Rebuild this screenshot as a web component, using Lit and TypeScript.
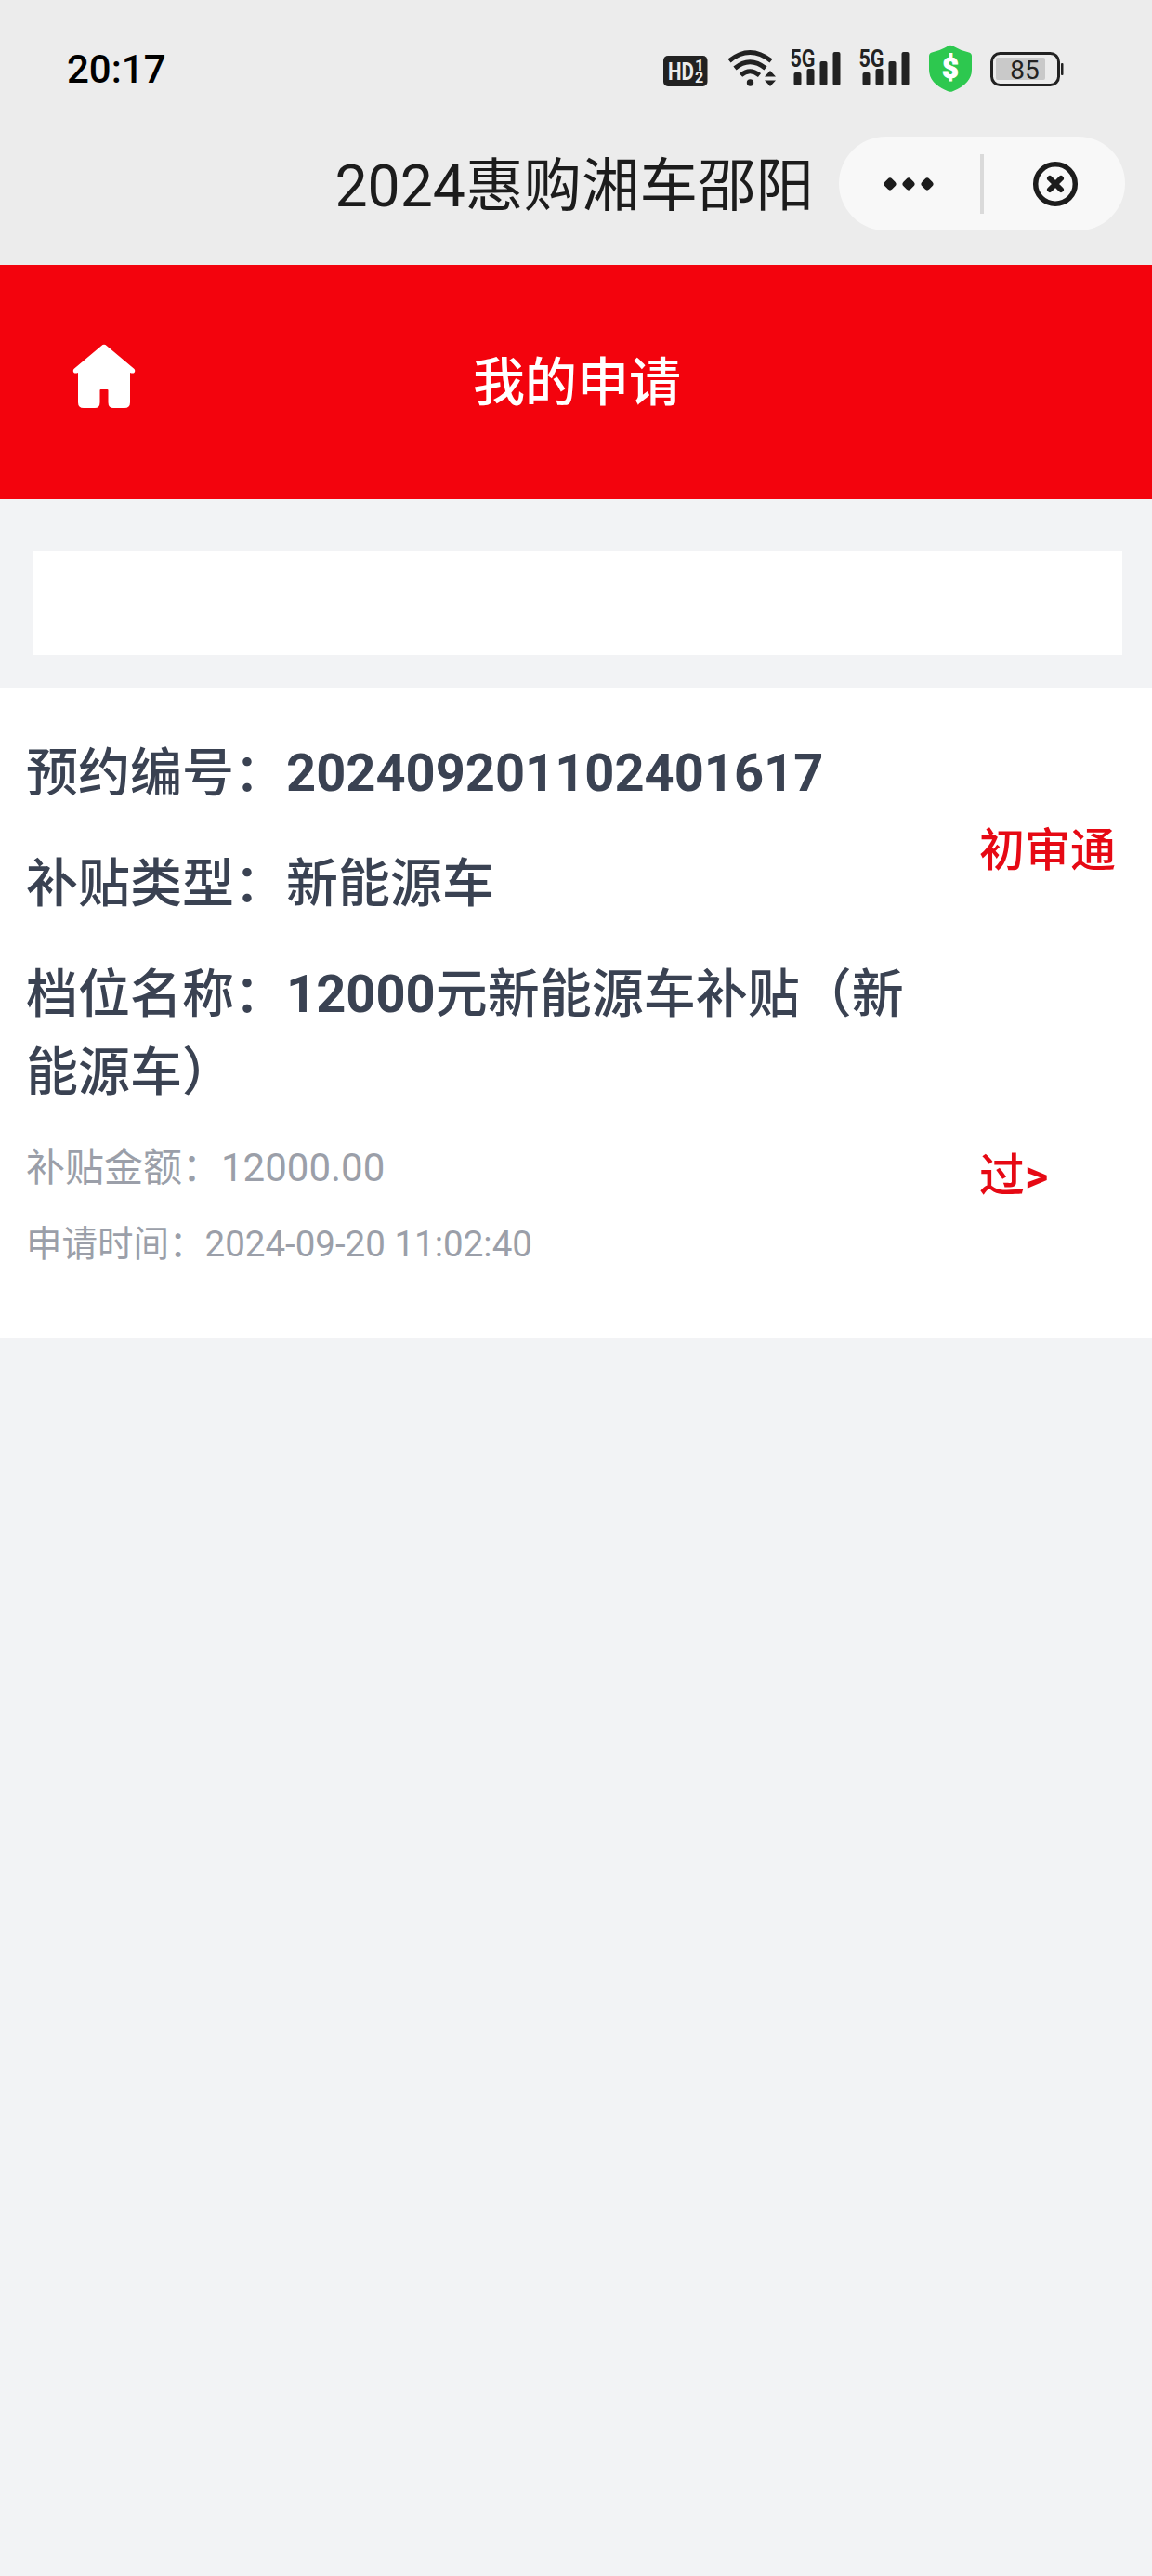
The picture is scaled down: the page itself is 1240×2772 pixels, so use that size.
import { LitElement, html, css, svg } from "lit";
import { customElement } from "lit/decorators.js";

const signal = () => html`
  <svg class="signal" width="56" height="56" viewBox="0 0 56 56">
    <text x="-0.5" y="25.5" font-size="25" font-weight="700" textLength="27" lengthAdjust="spacingAndGlyphs">5G</text>
    ${[[3.5, 32], [17.5, 28], [31.5, 20], [45.5, 10]].map(
      ([x, y]) => svg`<rect x=${x} y=${y} width="8" height=${46 - y} rx="2"></rect>`
    )}
  </svg>`;

@customElement("status-bar")
export class StatusBar extends LitElement {
  static styles = css`
    :host { display: flex; align-items: center; height: 56px; padding: 46px 95px 0 72px; }
    .time { flex: 1; font-size: 42px; line-height: 56px; font-weight: 500; color: #000; padding-top: 2px; }
    svg { display: block; fill: #222; font-family: Roboto, sans-serif; }
    .hd { margin-right: 20px; }
    .wifi { margin-right: 15px; }
    .signal { margin-right: 18px; }
    .shield { margin: 0 20px 0 1px; }
  `;
  render() {
    return html`
      <span class="time">20:17</span>
      <svg class="hd" width="48" height="56" viewBox="0 0 48 56">
        <rect x="0" y="14" width="47.5" height="33" rx="5"></rect>
        <g fill="#ececec" font-weight="700">
          <text x="5" y="39.500" font-size="26" textLength="28" lengthAdjust="spacingAndGlyphs">HD</text>
          <text x="34" y="29.500" font-size="17">1</text>
          <text x="34" y="42.500" font-size="16">2</text>
        </g>
      </svg>
      <svg class="wifi" width="54" height="56" viewBox="0 0 54 56">
        <g fill="none" stroke="#222" stroke-width="5">
          <path d="M3 19.500Q25 1.500 48 19.500"></path>
          <path d="M9 27.500Q25 14 42 27.500"></path>
          <path d="M15.500 35Q25 26.500 35.500 35"></path>
        </g>
        <circle cx="25.500" cy="43" r="3.700"></circle>
        <path d="M47 30l6 6.500H41zM47 47l6-6.500H41z"></path>
      </svg>
      ${signal()}${signal()}
      <svg class="shield" width="46" height="56" viewBox="0 0 46 56">
        <path fill="#2dc84f" d="M20.500 3.500Q23 2 25.500 3.500Q34 8.500 43 10.500Q46 11.300 46 14.500V29Q46 44 25.500 52.300Q23 53.300 20.500 52.300Q0 44 0 29V14.500Q0 11.300 3 10.500Q12 8.500 20.500 3.500Z"></path>
        <text x="23" y="38" text-anchor="middle" font-size="31" font-weight="800" fill="#fff" stroke="#fff">$</text>
      </svg>
      <svg width="79" height="56" viewBox="0 0 79 56">
        <rect x="1.500" y="11.500" width="72" height="34" rx="9" fill="none" stroke="#222" stroke-width="3"></rect>
        <rect x="6" y="16" width="53" height="24" rx="2" fill="#c9c9c9"></rect>
        <text x="37" y="38.700" text-anchor="middle" font-size="28">85</text>
        <rect x="76" y="22" width="2.500" height="13" rx="1"></rect>
      </svg>`;
  }
}

@customElement("mini-title-bar")
export class MiniTitleBar extends LitElement {
  static styles = css`
    :host { display: flex; justify-content: flex-end; align-items: center; gap: 27px; height: 191px; margin-bottom: -8px; padding-right: 29px; }
    .title { font-size: 62.500px; line-height: 90px; color: #1c1c1c; white-space: nowrap; padding-top: 7px; }
    .capsule { display: flex; align-items: center; width: 308px; height: 101px; border-radius: 51px; background: #f8f8f8; }
    .half { flex: 1; display: flex; justify-content: center; }
    .divider { width: 4px; height: 64px; background: #dadada; }
    svg { display: block; }
    .dots { margin-right: 2px; }
    .close { margin-left: 2px; }
  `;
  render() {
    return html`
      <span class="title">2024惠购湘车邵阳</span>
      <div class="capsule">
        <div class="half">
          <svg class="dots" width="56" height="20" viewBox="0 0 56 20" fill="#1c1c1c">
            ${[8, 28, 48].map(
              (x) => svg`<rect x=${x - 5.5} y="4.5" width="11" height="11" rx="3.2" transform=${`rotate(45 ${x} 10)`}></rect>`
            )}
          </svg>
        </div>
        <div class="divider"></div>
        <div class="half">
          <svg class="close" width="50" height="50" viewBox="0 0 50 50" fill="none" stroke="#1c1c1c">
            <circle cx="25" cy="25" r="21.300" stroke-width="5.500"></circle>
            <path d="M19 19L31 31M31 19L19 31" stroke-width="6" stroke-linecap="round"></path>
          </svg>
        </div>
      </div>`;
  }
}

@customElement("page-header")
export class PageHeader extends LitElement {
  static styles = css`
    :host { display: grid; grid-template-columns: 1fr auto 1fr; align-items: center; height: 252px; background: #f3030d; color: #fff; }
    .home { display: block; margin: -13px 0 0 78px; }
    .title { font-size: 56px; line-height: 84px; font-weight: 500; padding: 2px 0 0 2px; }
  `;
  render() {
    return html`
      <svg class="home" width="68" height="70" viewBox="0 0 68 70" fill="#fff">
        <path d="M31 2.200Q34 -0.500 37 2.200L66.500 27Q68 29 66.500 31Q65 32 62 31V63Q62 69 56 69H44Q38.500 69 38.500 63V50Q38.500 49 37.500 49H30.500Q29.500 49 29.500 50V63Q29.500 69 24 69H12Q6 69 6 63V31Q3 32 1.500 31Q0 29 1.500 27Z"></path>
      </svg>
      <span class="title">我的申请</span>
      <span></span>`;
  }
}

@customElement("application-card")
export class ApplicationCard extends LitElement {
  static styles = css`
    :host { display: flex; justify-content: space-between; box-sizing: border-box; height: 700px; background: #fff; padding: 0 28px; }
    .details { width: 992px; padding-top: 50px; }
    .row { font-size: 56px; line-height: 84px; font-weight: 500; color: #3a4252; margin-bottom: 35px; }
    .row.last { margin-bottom: 29px; }
    .number { font-weight: 700; }
    .muted { color: #9b9fa9; font-weight: 400; }
    .amount { font-size: 42px; line-height: 63px; }
    .time { font-size: 38.500px; line-height: 60px; margin-top: 21px; }
    .status { width: 158px; font-size: 49px; line-height: 350px; font-weight: 500; color: #e60914; padding-top: 1px; }
    .arrow { font-weight: 700; }
  `;
  render() {
    return html`
      <div class="details">
        <div class="row">预约编号：<span class="number">202409201102401617</span></div>
        <div class="row">补贴类型：新能源车</div>
        <div class="row last">档位名称：<span class="number">12000</span>元新能源车补贴（新能源车）</div>
        <div class="muted amount">补贴金额：12000.00</div>
        <div class="muted time">申请时间：2024-09-20 11:02:40</div>
      </div>
      <div class="status">初审通过<span class="arrow">&gt;</span></div>`;
  }
}

@customElement("app-root")
export class AppRoot extends LitElement {
  static styles = css`
    :host { display: flow-root; min-height: 2772px; background: #f2f3f5; font-family: Roboto, "Noto Sans CJK SC", sans-serif; }
    .top { height: 285px; background: #ececec; }
    .search { height: 112px; margin: 56px 32px 35px 35px; background: #fff; }
  `;
  render() {
    return html`
      <div class="top">
        <status-bar></status-bar>
        <mini-title-bar></mini-title-bar>
      </div>
      <page-header></page-header>
      <div class="search"></div>
      <application-card lang="zh-CN"></application-card>`;
  }
}
